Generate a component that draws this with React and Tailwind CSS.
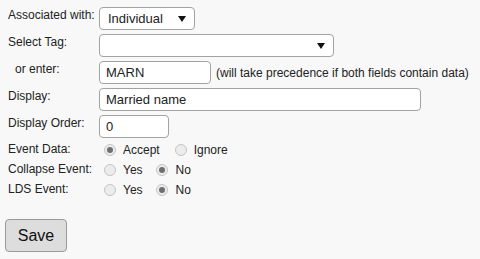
import { useState } from "react";

function Arrow() {
    return (
        <svg width="8" height="6" viewBox="0 0 8 6" className="shrink-0">
            <path d="M0 0 L8 0 L4 6 Z" fill="#111" />
        </svg>
    );
}

function Radio({ checked, onClick }) {
    return (
        <span onClick={onClick} className="w-[12px] h-[12px] rounded-full border border-[#c4c4c4] bg-[#ececec] flex items-center justify-center shrink-0">
            {checked ? <span className="w-[6px] h-[6px] rounded-full bg-[#6f6f6f]" /> : null}
        </span>
    );
}

function Label(props) {
    return <div className={`w-[99px] pl-[8px] leading-[15px] pt-[1px] shrink-0 ${props.className || ""}`}>{props.children}</div>;
}

function App() {
    const [eventData, setEventData] = useState("accept");
    const [collapse, setCollapse] = useState("no");
    const [lds, setLds] = useState("no");

    const inputBox = "h-[23px] border border-[#a3a3a3] rounded-[4px] bg-white text-[13px] pl-[6px] flex items-center";

    return (
        <div className="w-full h-[259px] bg-[#f8f8f8] text-[#222] text-[12px] pt-[7px] flex flex-col" style={{ fontFamily: '"Liberation Sans", Arial, sans-serif' }}>
            <div className="flex h-[23px]">
                <Label>Associated with:</Label>
                <div className={`${inputBox} w-[96px] pl-[8px] pr-[8px] justify-between`}>
                    <span>Individual</span>
                    <Arrow />
                </div>
            </div>

            <div className="flex h-[23px] mt-[4px]">
                <Label>Select Tag:</Label>
                <div className={`${inputBox} w-[235px] pr-[8px] justify-end`}>
                    <Arrow />
                </div>
            </div>

            <div className="flex h-[23px] mt-[4px]">
                <Label className="pl-[15px]">or enter:</Label>
                <div className={`${inputBox} w-[112px]`}>MARN</div>
                <span className="ml-[5px] self-center">(will take precedence if both fields contain data)</span>
            </div>

            <div className="flex h-[23px] mt-[4px]">
                <Label>Display:</Label>
                <div className={`${inputBox} w-[322px]`}>Married name</div>
            </div>

            <div className="flex h-[23px] mt-[4px]">
                <Label>Display Order:</Label>
                <div className={`${inputBox} w-[70px]`}>0</div>
            </div>

            <div className="flex h-[20px] mt-[3px]">
                <Label>Event Data:</Label>
                <div className="flex items-center h-[17px] pl-[5px]">
                    <Radio checked={eventData === "accept"} onClick={() => setEventData("accept")} />
                    <span className="ml-[7px]">Accept</span>
                    <span className="ml-[15px]"><Radio checked={eventData === "ignore"} onClick={() => setEventData("ignore")} /></span>
                    <span className="ml-[7px]">Ignore</span>
                </div>
            </div>

            <div className="flex h-[20px]">
                <Label>Collapse Event:</Label>
                <div className="flex items-center h-[17px] pl-[5px]">
                    <Radio checked={collapse === "yes"} onClick={() => setCollapse("yes")} />
                    <span className="ml-[7px]">Yes</span>
                    <span className="ml-[13px]"><Radio checked={collapse === "no"} onClick={() => setCollapse("no")} /></span>
                    <span className="ml-[8px]">No</span>
                </div>
            </div>

            <div className="flex h-[20px]">
                <Label>LDS Event:</Label>
                <div className="flex items-center h-[17px] pl-[5px]">
                    <Radio checked={lds === "yes"} onClick={() => setLds("yes")} />
                    <span className="ml-[7px]">Yes</span>
                    <span className="ml-[13px]"><Radio checked={lds === "no"} onClick={() => setLds("no")} /></span>
                    <span className="ml-[8px]">No</span>
                </div>
            </div>

            <div className="mt-[18px] pl-[5px]">
                <button className="w-[62px] h-[33px] bg-[#dddddd] border border-[#9a9a9a] rounded-[4px] text-[16px] text-[#111]">Save</button>
            </div>
        </div>
    );
}

export default App;
